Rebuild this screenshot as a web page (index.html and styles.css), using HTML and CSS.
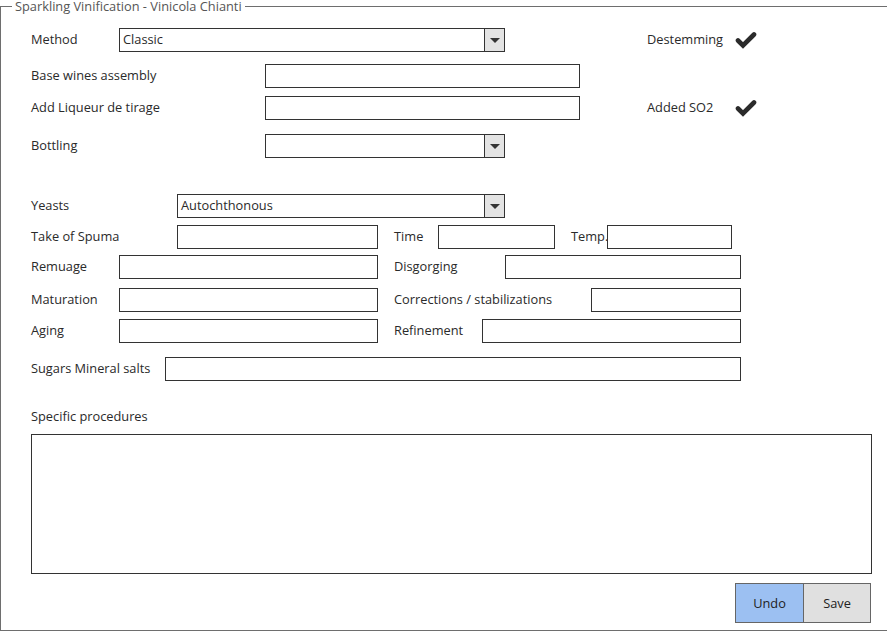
FILE: index.html
```html
<!DOCTYPE html>
<html>
<head>
<meta charset="utf-8">
<link rel="stylesheet" href="styles.css">
</head>
<body>
<fieldset class="frame">
  <legend class="title">Sparkling Vinification - Vinicola Chianti</legend>
  <div class="form">
    <div class="row r1">
      <span class="lbl w88">Method</span>
      <div class="box select w386"><span class="val">Classic</span><span class="drop"><i class="tri"></i></span></div>
      <span class="lbl side w89">Destemming</span>
      <svg class="check" width="22" height="18" viewBox="0 0 22 18"><path d="M3 9.5 L8 14.5 L19 3.5" fill="none" stroke="#2b2b2b" stroke-width="4.6" stroke-linecap="round" stroke-linejoin="miter"/></svg>
    </div>
    <div class="row r2">
      <span class="lbl w234">Base wines assembly</span>
      <div class="box w315"></div>
    </div>
    <div class="row r3">
      <span class="lbl w234">Add Liqueur de tirage</span>
      <div class="box w315"></div>
      <span class="lbl side2 w89">Added SO2</span>
      <svg class="check" width="22" height="18" viewBox="0 0 22 18"><path d="M3 9.5 L8 14.5 L19 3.5" fill="none" stroke="#2b2b2b" stroke-width="4.6" stroke-linecap="round" stroke-linejoin="miter"/></svg>
    </div>
    <div class="row r4">
      <span class="lbl w234">Bottling</span>
      <div class="box select w240"><span class="val"></span><span class="drop"><i class="tri"></i></span></div>
    </div>
    <div class="row r5">
      <span class="lbl w146">Yeasts</span>
      <div class="box select w328"><span class="val">Autochthonous</span><span class="drop"><i class="tri"></i></span></div>
    </div>
    <div class="row r6">
      <span class="lbl w146">Take of Spuma</span>
      <div class="box w201"></div>
      <span class="lbl gap16 w44">Time</span>
      <div class="box w117"></div>
      <span class="lbl gap16 w36">Temp.</span>
      <div class="box w125"></div>
    </div>
    <div class="row r7">
      <span class="lbl w88">Remuage</span>
      <div class="box w259"></div>
      <span class="lbl gap16 w111">Disgorging</span>
      <div class="box w236"></div>
    </div>
    <div class="row r8">
      <span class="lbl w88">Maturation</span>
      <div class="box w259"></div>
      <span class="lbl gap16 w197">Corrections / stabilizations</span>
      <div class="box w150"></div>
    </div>
    <div class="row r9">
      <span class="lbl w88">Aging</span>
      <div class="box w259"></div>
      <span class="lbl gap16 w88">Refinement</span>
      <div class="box w259"></div>
    </div>
    <div class="row r10">
      <span class="lbl w134">Sugars Mineral salts</span>
      <div class="box w576"></div>
    </div>
    <div class="caption">Specific procedures</div>
    <div class="area"></div>
    <div class="actions">
      <button class="btn primary">Undo</button><button class="btn">Save</button>
    </div>
  </div>
</fieldset>
</body>
</html>
```
FILE: styles.css
```css
html, body {
  margin: 0;
  padding: 0;
  background: #ffffff;
}
body {
  font-family: "Open Sans", "Liberation Sans", sans-serif;
  font-size: 12.8px;
  color: #2a2a2a;
}
.frame {
  margin: 0;
  padding: 0;
  border: 1px solid #6e6e6e;
  width: 887px;
  height: 631px;
  box-sizing: border-box;
}
.title {
  margin-left: 11px;
  padding: 0 3px;
  line-height: 13px;
  font-size: 12.8px;
  color: #555;
}
.form {
  padding: 15px 15px 0 30px;
}
.row {
  display: flex;
  align-items: center;
  height: 24px;
}
.r2 { margin-top: 12px; }
.r3 { margin-top: 8px; }
.r4 { margin-top: 14px; }
.r5 { margin-top: 36px; }
.r6 { margin-top: 7px; }
.r7 { margin-top: 6px; }
.r8 { margin-top: 9px; }
.r9 { margin-top: 7px; }
.r10 { margin-top: 14px; }
.lbl {
  flex: none;
  white-space: nowrap;
  margin-top: -2px;
}
.w36 { width: 36px; }
.w44 { width: 44px; }
.w88 { width: 88px; }
.w89 { width: 89px; }
.w111 { width: 111px; }
.w134 { width: 134px; }
.w146 { width: 146px; }
.w197 { width: 197px; }
.w234 { width: 234px; }
.gap16 { margin-left: 16px; }
.side { margin-left: 142px; }
.side2 { margin-left: 67px; }
.box {
  flex: none;
  box-sizing: border-box;
  height: 24px;
  border: 1px solid #333;
  background: #fff;
}
.box.w117 { width: 117px; }
.box.w125 { width: 125px; }
.box.w150 { width: 150px; }
.box.w201 { width: 201px; }
.box.w236 { width: 236px; }
.box.w240 { width: 240px; }
.box.w259 { width: 259px; }
.box.w315 { width: 315px; }
.box.w328 { width: 328px; }
.box.w386 { width: 386px; }
.box.w576 { width: 576px; }
.select {
  display: flex;
  align-items: stretch;
}
.val {
  flex: 1;
  padding-left: 3px;
  line-height: 21px;
}
.drop {
  width: 19px;
  background: #e3e3e3;
  border-left: 1px solid #333;
  display: flex;
  align-items: center;
  justify-content: center;
}
.tri {
  width: 0;
  height: 0;
  border-left: 5px solid transparent;
  border-right: 5px solid transparent;
  border-top: 5px solid #333;
  margin-top: 1px;
}
.check {
  flex: none;
  display: block;
  margin-left: -1px;
}
.caption {
  margin-top: 27px;
  line-height: 17px;
}
.area {
  margin-top: 9px;
  box-sizing: border-box;
  width: 841px;
  height: 140px;
  border: 1px solid #333;
}
.actions {
  display: flex;
  justify-content: flex-end;
  margin-top: 9px;
  padding-right: 1px;
}
.btn {
  font: inherit;
  color: #222;
  width: 68px;
  height: 40px;
  border: 1px solid #666;
  background: #e0e0e0;
  margin: 0;
  padding: 0;
}
.btn.primary {
  background: #9cc0f2;
  border-right: none;
}
```
